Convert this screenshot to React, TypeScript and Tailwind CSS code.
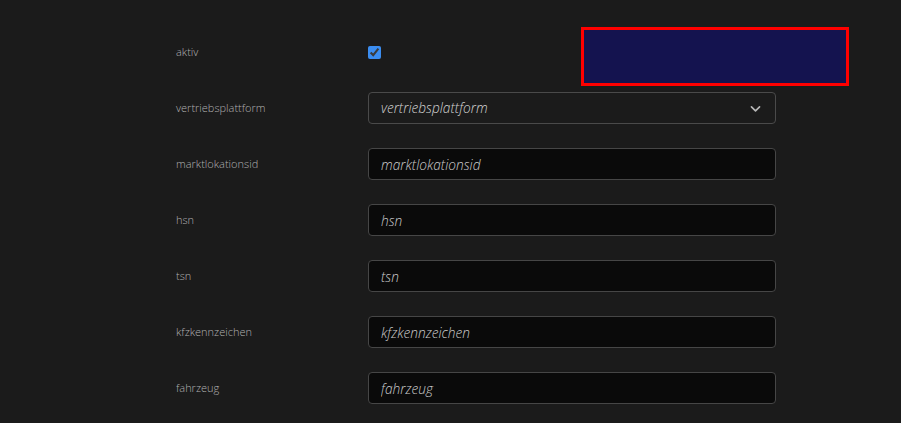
const fields = ["marktlokationsid", "hsn", "tsn", "kfzkennzeichen", "fahrzeug"];

function Row({ label, children }: { label: string; children: React.ReactNode }) {
  return (
    <div className="flex h-8 items-center">
      <label className="w-[192px] shrink-0 text-[11px] text-[#b0b0b0]">{label}</label>
      <div className="w-[408px]">{children}</div>
    </div>
  );
}

export default function App() {
  return (
    <div
      className="relative min-h-[423px] w-full bg-[#1b1b1b] pl-[176px] pt-9 font-light [color-scheme:dark]"
      style={{ fontFamily: '"Open Sans", "Noto Sans", sans-serif' }}
    >
      <div className="flex flex-col gap-6">
        <Row label="aktiv">
          <input type="checkbox" defaultChecked className="m-0 block h-[13px] w-[13px] accent-[#3b8df0]" />
        </Row>
        <Row label="vertriebsplattform">
          <div className="flex h-8 items-center justify-between rounded-[4px] border border-[#4a4a4a] bg-[#1b1b1b] pl-3 pr-[13px]">
            <span className="text-[13.7px] italic text-[#d4d4d4]">vertriebsplattform</span>
            <svg width="13" height="13" viewBox="0 0 16 16" fill="none" stroke="#b8b8b8" strokeWidth="2" strokeLinecap="round" strokeLinejoin="round">
              <path d="M3 6l5 5 5-5" />
            </svg>
          </div>
        </Row>
        {fields.map((f) => (
          <Row key={f} label={f}>
            <input
              placeholder={f}
              className="block h-8 w-full rounded-[4px] border border-[#464646] bg-[#0a0a0a] px-3 text-[13.7px] font-light italic text-[#d0d0d0] outline-none placeholder:text-[#cccccc]"
            />
          </Row>
        ))}
      </div>
      <div className="absolute left-[581px] top-[27px] h-[59px] w-[268px] border-[3px] border-[#ff0000] bg-[#14134f]" />
    </div>
  );
}
